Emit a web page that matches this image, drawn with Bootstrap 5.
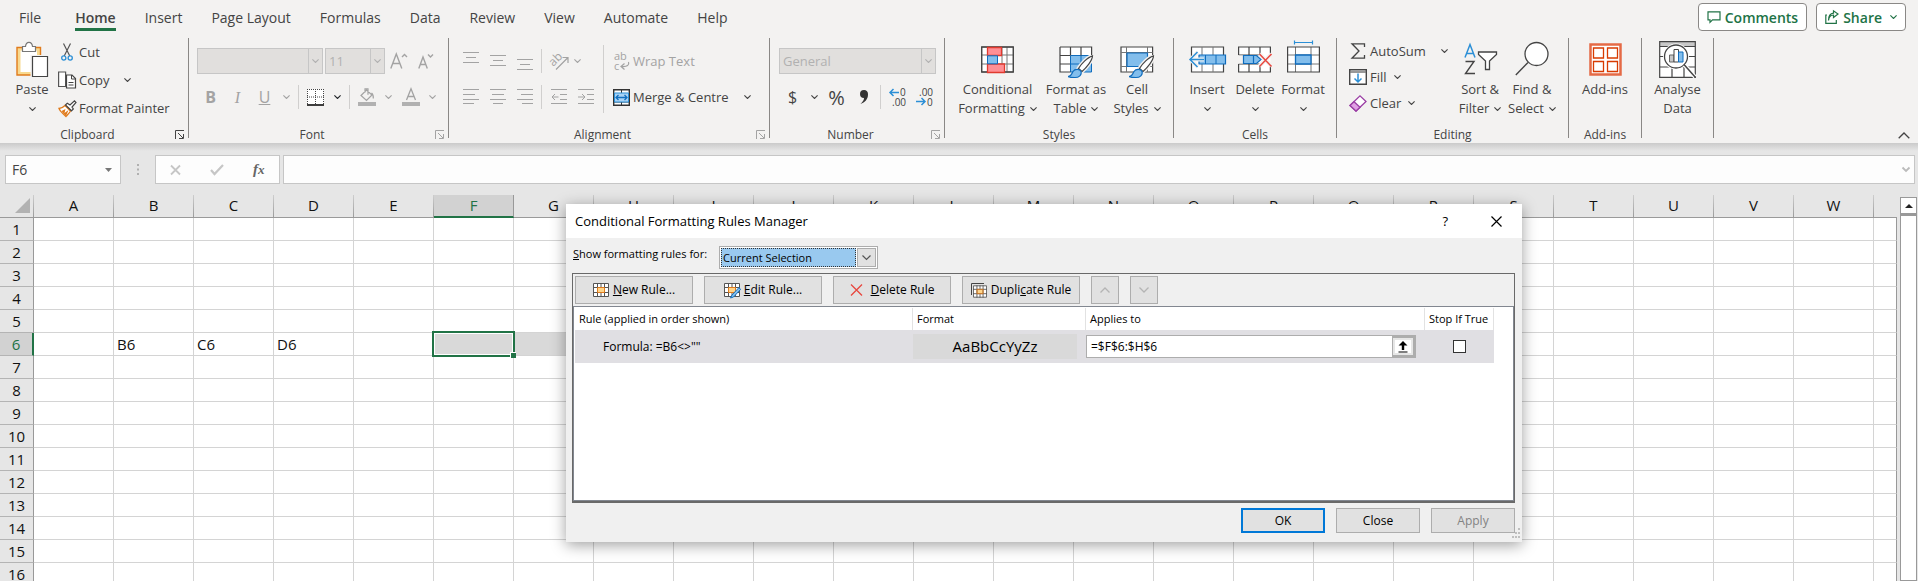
<!DOCTYPE html>
<html lang="en">
<head>
<meta charset="utf-8">
<meta name="viewport" content="width=device-width, initial-scale=1">
<title>Conditional Formatting Rules Manager</title>
<link href="https://cdn.jsdelivr.net/npm/bootstrap@5.3.0/dist/css/bootstrap.min.css" rel="stylesheet">
<style>
:root { --ink:#444; --dim:#a3a3a3; --green:#217346; --blue:#2b8fd6; }
body { font-family:"Open Sans","Noto Sans",sans-serif; font-size:13px; line-height:19px; color:var(--ink); background:#e6e6e6; }
button, select, input { font:inherit; color:inherit; }
button { background:none; border:0; padding:0; }
select { appearance:none; }
svg { display:block; flex:none; overflow:visible; }
.g { fill:none; stroke:currentColor; }
.serif { font-family:"Liberation Serif",serif; }

/* tab strip */
.tabstrip { background:#f3f2f1; height:38px; padding:0 12px 0 19px; }
.tabs { gap:29px; font-size:14px; }
.tabs .nav-link { padding:8px 0 0; color:var(--ink); height:31px; line-height:20px; }
.tabs .nav-link.active { font-weight:600; border-bottom:3px solid var(--green); }
.tabs .nav-item:first-child { margin-right:5px; }
.pills { gap:9px; padding-top:3px; }
.pill { height:28px; border:1px solid #8a8886; border-radius:4px; background:#fff; color:var(--green); font-weight:600; font-size:14px; padding:0 8px; }

/* ribbon */
.ribbon { background:#f3f2f1; height:105px; }
.rgroup { height:105px; }
.g-clip { width:188px; } .g-font { width:259px; } .g-align { width:320px; } .g-num { width:174px; }
.g-styles { width:228px; } .g-cells { width:162px; } .g-edit { width:231px; } .g-add { width:72px; } .g-data { width:71px; }
.rbody { height:88px; }
.rfoot { height:17px; line-height:17px; font-size:12px; }
.rline { width:1px; height:100px; background:#8a8886; }
.vline { width:1px; height:24px; background:#d0cfce; margin:0 3px; }
.tall { height:68px; margin-top:7px; }
.aligns { width:143px; }
.r1 { height:38px; } .r2 { height:34px; }
.ib { width:27px; height:28px; display:flex; align-items:center; justify-content:center; }
.cv { width:17px; height:28px; display:flex; align-items:center; justify-content:center; }
.cv.slim { width:10px; }
.dim { color:var(--dim); }
.big { display:flex; flex-direction:column; align-items:stretch; justify-content:flex-start; text-align:center; white-space:nowrap; }
.big .pic { height:42px; display:flex; align-items:center; justify-content:center; }
.big .ln { display:flex; height:19px; align-items:center; justify-content:center; gap:5px; }
.bw-48 { width:48px; } .bw-52 { width:52px; } .bw-70 { width:70px; } .bw-87 { width:87px; }
.pad-6 { padding-left:6px; } .pad-9 { padding-left:9px; } .pad-12 { padding-left:12px; }
.edits { width:105px; }
.sm { display:flex; align-items:center; gap:3px; white-space:nowrap; }
.sm .pic { width:18px; display:flex; justify-content:center; }
.sm .far { margin-left:12px; }
.h28 { height:28px; } .h26 { height:26px; }
.combo { height:26px; border:1px solid #c6c6c6; background:#e1dfdd; color:#b1b1b1; display:flex; }
.combo select { border:0; background:none; flex:1; min-width:0; padding:0 3px; color:#b1b1b1; opacity:1; }
.combo span { width:14px; border-left:1px solid #c6c6c6; display:flex; align-items:center; justify-content:center; }
.w-font { width:126px; margin-right:2px; } .w-size { width:60px; } .w-num { width:157px; }

/* formula bar */
.fbar { height:52px; padding:12px 3px 11px 5px; background:linear-gradient(#cacaca,#e6e6e6 8px); }
.fbox { height:29px; background:#fdfdfd; border:1px solid #c6c6c6; }
.fbox input { border:0; background:none; outline:0; min-width:0; flex:1; padding:0 6px; font-size:14px; }
.fname { width:116px; } .fbtns { width:125px; margin-right:3px; }
.fxb { font-size:15px; color:#666; }

/* sheet */
main, .pane { min-width:0; min-height:0; }
.grid { table-layout:fixed; border-collapse:separate; border-spacing:0; width:100%; font-size:15px; line-height:22px; color:#111; }
.grid .c-row { width:34px; } .grid .c-cell { width:80px; }
.grid th, .grid td { height:23px; padding:0; overflow:hidden; white-space:nowrap; }
.grid th { font-weight:400; text-align:center; background:#e6e6e6; }
.grid thead th { line-height:20px; padding-bottom:2px; border-bottom:1px solid #999; border-right:1px solid; border-image:linear-gradient(#d0d0d0,#999) 1; border-top:0; border-left:0; }
.grid thead th:last-child { border-right-width:0; }
.grid thead svg { margin-left:15px; }
.grid tbody th { border-right:1px solid #999; border-bottom:1px solid #b4b4b4; }
.grid td { background:#fff; border-right:1px solid #d4d4d4; border-bottom:1px solid #d4d4d4; padding-left:3px; }
.grid td:last-child { border-right-color:#999; }
.grid thead th.on { background:#d2d2d2; color:var(--green); border-image:none; border-color:#999; border-bottom:2px solid var(--green); padding-bottom:1px; }
.grid tbody th.on { background:#d2d2d2; color:var(--green); border-right:2px solid var(--green); }
.grid td.sel { background:#d9d9d9; }
.grid td.cur { position:relative; overflow:visible; }
.cur i { position:absolute; inset:-2px; border:2px solid var(--green); box-shadow:inset 0 0 0 1px #fff; }
.cur i::after { content:""; position:absolute; right:-3px; bottom:-3px; width:6px; height:6px; background:var(--green); border:solid #fff; border-width:1px 0 0 1px; }
.scroller { width:21px; flex:none; padding:2px 1px 0 3px; }
.scroller button { height:17px; border:1px solid #999; background:#fff; }
.track { border:1px solid #999; border-top-width:2px; background:#fff; }

/* dialog */
.dlg { position:absolute; left:566px; top:204px; width:956px; background:#f0f0f0; color:#000; font-size:12px; line-height:16px; box-shadow:0 3px 14px rgba(0,0,0,.38); }
.dtitle { height:34px; background:#fff; padding:0 20px 0 9px; font-size:13px; gap:43px; }
.dbody { padding:8px 7px 9px 6px; }
.scope { height:27px; gap:12px; font-size:11px; padding-left:1px; }
.dsel { width:159px; height:23px; border:1px solid #adadad; background:#fff; padding:1px; gap:1px; }
.dsel select { flex:1; min-width:0; border:1px dotted #333; background:#99c9ef; padding:0 1px; line-height:14px; }
.dsel span { width:19px; border:1px solid #adadad; background:#e1e1e1; display:flex; align-items:center; justify-content:center; }
.frame { border:1px solid #696969; border-width:1px 1px 2px 1px; }
.dtools { padding:2px; height:32px; gap:11px; }
.wb { height:28px; border:1px solid #adadad; background:#e1e1e1; display:flex; align-items:center; justify-content:center; gap:4px; white-space:nowrap; }
.wb:disabled { color:#838383; }
.w118 { width:118px; } .wb.w28 { width:28px; color:#b4b4b4; }
.list { background:#fff; border:1px solid #828790; height:195px; padding:1px; }
.rules { table-layout:fixed; border-collapse:separate; border-spacing:0; width:919px; }
.rules .c-rule { width:338px; } .rules .c-fmt { width:173px; } .rules .c-app { width:339px; } .rules .c-stop { width:69px; }
.rules th { font-weight:400; font-size:11px; height:22px; border-right:1px solid #e2e2e2; padding:0 4px; white-space:nowrap; }
.rules td { background:#e0dfe3; height:33px; padding:0; }
.rules td:first-child { padding-left:28px; }
.swatch { background:#d9d9d9; height:25px; width:164px; font-size:15px; line-height:25px; text-align:center; }
.ref { width:330px; height:23px; border:1px solid #adadad; background:#fff; }
.ref input { flex:1; min-width:0; border:0; background:none; outline:0; padding:0 4px; }
.ref button { width:23px; border:2px solid #adadad; border-left-width:1px; background:#fff; box-shadow:inset 0 0 0 2px #e6e6e6; display:flex; align-items:center; justify-content:center; }
.tick { appearance:none; width:13px; height:13px; border:1px solid #333; background:#fff; display:block; margin:0 auto; }
.dfoot { gap:11px; margin-top:5px; }
.dfoot .wb { width:84px; height:25px; }
.dfoot .ok { border:2px solid #0078d7; }
.grip { position:absolute; right:2px; bottom:3px; color:#bfbfbf; }
</style>
</head>
<body class="vh-100 overflow-hidden d-flex flex-column position-relative">

<svg width="0" height="0" class="position-absolute">
  <symbol id="chev" viewBox="0 0 7 4"><path d="M.4 .4 3.5 3.5 6.6 .4" fill="none" stroke="currentColor" stroke-width="1.1"/></symbol>
  <symbol id="launch" viewBox="0 0 9 9"><path d="M.5 9V.5H9M3 3l5 5M8.500 4v4.500H4" fill="none" stroke="currentColor"/></symbol>
  <symbol id="brush" viewBox="0 0 26 24"><path d="M24.500 .8C20 2 13 9 10.500 13.500l3.500 3C18 13 24.500 5.500 24.500 .8z" fill="#fff" stroke="#f3f2f1" stroke-width="4"/><path d="M24.500 .8C20 2 13 9 10.500 13.500l3.500 3C18 13 24.500 5.500 24.500 .8z" fill="#fff" stroke="#444" stroke-width="1.200"/><path d="M0 21.500c3.500 0 3.500-2.500 5-5 2-3 7-2.500 8 0 1 3.500-2 6-6 6C4 22.500 2 22.500 0 21.500z" fill="#83beec" stroke="#0f6cbd" stroke-width="1.200"/></symbol>
  <symbol id="grid16" viewBox="0 0 16 14"><path d="M.5 .5h15v13H.5z" fill="#fff"/><path d="M4.500 4.500h7v5h-7z" fill="#ffd58a"/><path d="M.5 .5h15v13H.5zM4.500 0v14M11.500 0v14M8 0v4M8 10v4M0 4.500h16M0 9.500h16" fill="none" stroke="#555"/><path d="M4.500 4.500h7v5h-7z" fill="none" stroke="#e07b1c"/></symbol>
</svg>

<header class="tabstrip d-flex justify-content-between flex-shrink-0">
  <ul class="nav tabs flex-nowrap text-nowrap">
    <li class="nav-item"><a class="nav-link" href="#">File</a></li>
    <li class="nav-item"><a class="nav-link active" href="#">Home</a></li>
    <li class="nav-item"><a class="nav-link" href="#">Insert</a></li>
    <li class="nav-item"><a class="nav-link" href="#">Page Layout</a></li>
    <li class="nav-item"><a class="nav-link" href="#">Formulas</a></li>
    <li class="nav-item"><a class="nav-link" href="#">Data</a></li>
    <li class="nav-item"><a class="nav-link" href="#">Review</a></li>
    <li class="nav-item"><a class="nav-link" href="#">View</a></li>
    <li class="nav-item"><a class="nav-link" href="#">Automate</a></li>
    <li class="nav-item"><a class="nav-link" href="#">Help</a></li>
  </ul>
  <div class="pills d-flex">
    <button class="pill d-flex align-items-center gap-1"><svg width="14" height="12" class="g" stroke-width="1.200"><path d="M1 .8h12v8H5.500L3 11.300V8.800H1z"/></svg>Comments</button>
    <button class="pill d-flex align-items-center"><svg width="14" height="14" class="g me-1" stroke-width="1.200"><path d="M2 5H.8v8.300h10.500V10M3.500 10.500C4 6.500 6 5 8.500 5V7.500L13 4 8.500 .8v2.400C5.500 3.500 3.500 6 3.500 10.500z"/></svg>Share<svg width="7" height="4" class="ms-2"><use href="#chev"/></svg></button>
  </div>
</header>

<div class="ribbon d-flex align-items-start flex-shrink-0">
  <section class="rgroup g-clip">
    <div class="rbody d-flex pad-6">
      <button class="big bw-52">
        <span class="pic"><svg width="32" height="36"><path d="M1 6.500h23.500V34H1z" fill="#f8d98f" stroke="#e07b1c" stroke-width="1.400"/><path d="M4.500 9.500h16.500v21.500H4.500z" fill="#fff"/><path d="M6.500 10.500V5.500h3C10 0 16 0 16.500 5.500h3v5z" fill="#fff" stroke="#777" stroke-width="1.200"/><path d="M16 15.500h15.500V35.500H16z" fill="#fff" stroke="#f3f2f1" stroke-width="3"/><path d="M16.500 15.500h15V35.500h-15z" fill="#fff" stroke="#444" stroke-width="1.200"/></svg></span>
        <span class="ln">Paste</span><span class="ln"><svg width="7" height="4"><use href="#chev"/></svg></span>
      </button>
      <div>
        <button class="sm h28"><span class="pic"><svg width="12" height="18"><path d="M2.500 .5 8.800 13M9.500 .5 3.200 13" fill="none" stroke="#555" stroke-width="1.200"/><g fill="none" stroke="#2b8fd6" stroke-width="1.300"><circle cx="2.800" cy="15" r="2.100"/><circle cx="9.200" cy="15" r="2.100"/></g></svg></span>Cut</button>
        <button class="sm h28"><span class="pic"><svg width="18" height="18"><path d="M.6 1h7v14.500h-7z" fill="#fff" stroke="#555" stroke-width="1.200"/><path d="M8.500 4h5.500l3.500 3.500V17h-9z" fill="#fff" stroke="#444" stroke-width="1.200"/><path d="M13.500 4v4h4M10.500 11.500h5M10.500 14h5" class="g" stroke="#444"/></svg></span>Copy<svg width="7" height="4" class="far"><use href="#chev"/></svg></button>
        <button class="sm h28"><span class="pic"><svg width="19" height="17"><path d="M1 8.500C3.500 8.500 5.500 7 7 5.500l5.500 5.500c-1 2-3.500 4-4.500 5.500C6 14 2 12 1 8.500z" fill="#fff" stroke="#e07b1c" stroke-width="1.300"/><path d="M3.500 11l4-2-1 4 4-3-2.500 6z" fill="#e07b1c"/><path d="M7.500 5l1.800-1.800L12 5 16.500.8l1.500 1.700L14 7l1.300 2-1.800 1.800z" fill="#fff" stroke="#444" stroke-width="1.200"/></svg></span>Format Painter</button>
      </div>
    </div>
    <div class="rfoot d-flex align-items-center pe-1"><span class="flex-fill text-center">Clipboard</span><svg width="9" height="9"><use href="#launch"/></svg></div>
  </section><div class="rline"></div>

  <section class="rgroup g-font">
    <div class="rbody pt-1 ps-2">
      <div class="r1 d-flex align-items-center">
        <div class="combo w-font"><select disabled aria-label="Font"><option></option></select><span><svg width="7" height="4"><use href="#chev"/></svg></span></div>
        <div class="combo w-size"><select disabled aria-label="Font size"><option>11</option></select><span><svg width="7" height="4"><use href="#chev"/></svg></span></div>
        <button class="ib dim"><svg width="17" height="16" class="g" stroke-width="1.400"><path d="M.8 15.500 6.300 1l5.500 14.500M2.800 10.500h7M12 4l2.500-2.500L17 4"/></svg></button>
        <button class="ib dim"><svg width="15" height="16" class="g" stroke-width="1.400"><path d="M.8 15.500 5 4l4.300 11.500M2.300 11.500h5.500M10 1.500 12.500 4 15 1.500"/></svg></button>
      </div>
      <div class="r2 d-flex align-items-center dim">
        <button class="ib fw-bold fs-6">B</button><button class="ib fs-6 fst-italic serif">I</button><button class="ib fs-6 text-decoration-underline">U</button><button class="cv"><svg width="7" height="4"><use href="#chev"/></svg></button>
        <div class="vline"></div>
        <button class="ib text-dark"><svg width="17" height="17"><path d="M0 0h17v15H0z" fill="#fff"/><path d="M.5 0v15M8.500 0v15M16.500 0v15M0 .5h17M0 8h17" fill="none" stroke="#444" stroke-dasharray="1 1"/><path d="M0 16h17" stroke="#000" stroke-width="1.500"/></svg></button><button class="cv text-dark"><svg width="7" height="4"><use href="#chev"/></svg></button>
        <div class="vline"></div>
        <button class="ib"><svg width="18" height="18"><path d="M3 7.500 8.500 2l5.500 5-5.500 5.500zM7 4.500V.8h3v6M13.500 5c2 1.500 2 3 1.800 5.500" class="g" stroke-width="1.200"/><path d="M0 14h18v4H0z" fill="#b1b1b1"/></svg></button><button class="cv"><svg width="7" height="4"><use href="#chev"/></svg></button>
        <button class="ib"><svg width="18" height="18"><path d="M4.500 12 9 .8 13.500 12M6 8.500h6" class="g" stroke-width="1.300"/><path d="M0 14h18v4H0z" fill="#b1b1b1"/></svg></button><button class="cv"><svg width="7" height="4"><use href="#chev"/></svg></button>
      </div>
    </div>
    <div class="rfoot d-flex align-items-center pe-1"><span class="flex-fill text-center">Font</span><svg width="9" height="9" class="dim"><use href="#launch"/></svg></div>
  </section><div class="rline"></div>

  <section class="rgroup g-align">
    <div class="rbody d-flex ps-2">
      <div class="aligns pt-1 dim">
        <div class="r1 d-flex align-items-center">
          <button class="ib"><svg width="16" height="18" class="g"><path d="M0 .5h16M3 5.500h10M0 10.500h16"/></svg></button><button class="ib"><svg width="16" height="18" class="g"><path d="M0 3.500h16M3 8.500h10M0 13.500h16"/></svg></button><button class="ib"><svg width="16" height="18" class="g"><path d="M0 7.500h16M3 12.500h10M0 17.500h16"/></svg></button>
          <div class="vline"></div>
          <button class="ib"><svg width="18" height="18"><g transform="rotate(-45 6 8)"><text x="-1" y="11" font-size="12" fill="currentColor">ab</text></g><path d="M6 17.500 17.500 6M12.500 5.500H18V11" class="g" stroke-width="1.200"/></svg></button><button class="cv slim"><svg width="7" height="4"><use href="#chev"/></svg></button>
        </div>
        <div class="r2 d-flex align-items-center">
          <button class="ib"><svg width="16" height="16" class="g"><path d="M0 .5h16M0 5.500h12M0 10.500h16M0 14.500h11"/></svg></button><button class="ib"><svg width="16" height="16" class="g"><path d="M0 .5h16M2 5.500h12M0 10.500h16M3 14.500h10"/></svg></button><button class="ib"><svg width="16" height="16" class="g"><path d="M0 .5h16M4 5.500h12M0 10.500h16M5 14.500h11"/></svg></button>
          <div class="vline"></div>
          <button class="ib"><svg width="16" height="16" class="g"><path d="M0 .5h16M9 5.500h7M9 10.500h7M0 14.500h16M1 8h6.500M4 5 1 8l3 3"/></svg></button><button class="ib"><svg width="16" height="16" class="g"><path d="M0 .5h16M9 5.500h7M9 10.500h7M0 14.500h16M0 8h6.500M4 5l3 3-3 3"/></svg></button>
        </div>
      </div>
      <div class="vline tall me-2"></div>
      <div class="pt-1">
        <button class="sm r1 dim"><span class="pic"><svg width="17" height="19"><text x="1" y="8" font-size="11" fill="currentColor">ab</text><text x="1" y="18" font-size="11" fill="currentColor">c</text><path d="M15.500 10c1 3-1 5-7 4.500M11.500 11.500l-3.500 3 3.500 3" class="g" stroke-width="1.200"/></svg></span>Wrap Text</button>
        <button class="sm r2"><span class="pic"><svg width="17" height="17"><path d="M.7 .7h15.600v15.600H.7z" fill="#fff" stroke="#333" stroke-width="1.400"/><path d="M8.500 0v17M1 4.500h15M1 13h15" stroke="#333"/><path d="M1.500 4h14v9h-14z" fill="#a9d3f5" stroke="#2b8fd6"/><path d="M3 8.500h11M5.500 6 3 8.500 5.500 11M11.500 6 14 8.500 11.500 11" fill="none" stroke="#1270c0" stroke-width="1.300"/></svg></span>Merge &amp; Centre<svg width="7" height="4" class="far"><use href="#chev"/></svg></button>
      </div>
    </div>
    <div class="rfoot d-flex align-items-center pe-1"><span class="flex-fill text-center">Alignment</span><svg width="9" height="9" class="dim"><use href="#launch"/></svg></div>
  </section><div class="rline"></div>

  <section class="rgroup g-num">
    <div class="rbody pt-1 pad-9">
      <div class="r1 d-flex align-items-center"><div class="combo w-num"><select disabled aria-label="Number format"><option>General</option></select><span><svg width="7" height="4"><use href="#chev"/></svg></span></div></div>
      <div class="r2 d-flex align-items-center">
        <button class="ib fs-6">$</button><button class="cv"><svg width="7" height="4"><use href="#chev"/></svg></button><button class="ib fs-5">%</button>
        <button class="ib"><svg width="10" height="16"><path d="M5 1a4 4 0 0 1 4 4.500C9 10 6 13.500 1.500 15 4 12.500 5 11 5 9a4 4 0 0 1 0-8z" fill="#333"/></svg></button>
        <div class="vline"></div>
        <button class="ib"><svg width="18" height="18"><text x="11" y="8" font-size="10" fill="#444">0</text><text x="3" y="18" font-size="10" fill="#444">.00</text><path d="M1 4.500h9M4.500 1 1 4.500 4.500 8" fill="none" stroke="#2b8fd6" stroke-width="1.500"/></svg></button>
        <button class="ib"><svg width="18" height="18"><text x="3" y="8" font-size="10" fill="#444">.00</text><text x="11" y="18" font-size="10" fill="#444">0</text><path d="M0 13.500h9M5.500 10 9 13.500 5.500 17" fill="none" stroke="#2b8fd6" stroke-width="1.500"/></svg></button>
      </div>
    </div>
    <div class="rfoot d-flex align-items-center pe-1"><span class="flex-fill text-center">Number</span><svg width="9" height="9" class="dim"><use href="#launch"/></svg></div>
  </section><div class="rline"></div>

  <section class="rgroup g-styles">
    <div class="rbody d-flex pad-9">
      <button class="big bw-87"><span class="pic"><svg width="33" height="27"><path d="M.7 1h31.600v25H.7z" fill="#fff"/><path d="M.7 1h31.600v25H.7zM6.500 1v25M26 1v25M21 1v25M.7 9h31.600M.7 18h31.600" fill="none" stroke="#777"/><path d="M.7 1h31.600v25H.7z" fill="none" stroke="#444" stroke-width="1.300"/><path d="M6.500 1.500h14V9.500h-14zM6.500 18h17v8.500h-17z" fill="#ff8f95" stroke="#e03a2f" stroke-width="1.300"/><path d="M6.500 9.800h10v8h-10z" fill="#83beec" stroke="#0f6cbd" /></svg></span><span class="ln">Conditional</span><span class="ln">Formatting <svg width="7" height="4"><use href="#chev"/></svg></span></button>
      <button class="big bw-70"><span class="pic"><svg width="35" height="27"><path d="M1 1h31.600v25H1z" fill="#fff"/><path d="M11.500 9.500h21V26h-21z" fill="#83beec"/><path d="M11.500 9.500h21V26h-21zM22 9.500V26M11.500 18h21" fill="none" stroke="#0f6cbd"/><path d="M1 1h31.600v8.500M1 1v25h10.500M11.500 1v8.500M22 1v8.500M1 9.500h10M1 18h10" fill="none" stroke="#444" stroke-width="1.200"/><use href="#brush" x="9" y="9" width="26" height="24"/></svg></span><span class="ln">Format as</span><span class="ln">Table <svg width="7" height="4"><use href="#chev"/></svg></span></button>
      <button class="big bw-52"><span class="pic"><svg width="35" height="27"><path d="M1 1h31.600v25H1z" fill="#fff" stroke="#444" stroke-width="1.200"/><path d="M6.500 1v25M27.500 1v25M1 6.500h31.600M1 20.500h31.600" fill="none" stroke="#777"/><path d="M7 7h20.500v13.500H7z" fill="#83beec" stroke="#0f6cbd" stroke-width="1.200"/><use href="#brush" x="9" y="9" width="26" height="24"/></svg></span><span class="ln">Cell</span><span class="ln">Styles <svg width="7" height="4"><use href="#chev"/></svg></span></button>
    </div>
    <div class="rfoot text-center">Styles</div>
  </section><div class="rline"></div>

  <section class="rgroup g-cells">
    <div class="rbody d-flex pad-9">
      <button class="big bw-48"><span class="pic"><svg width="37" height="27"><path d="M2.500 1h32v25h-32z" fill="#fff" stroke="#444" stroke-width="1.200"/><path d="M13 1v25M24 1v25" stroke="#777"/><path d="M10 9h26.500v9H10z" fill="#83beec" stroke="#0f6cbd" stroke-width="1.200"/><path d="M16.500 9v9M27 9v9" stroke="#0f6cbd"/><path d="M15 13.500H2M9 6l-7.500 7.500L9 21" fill="none" stroke="#f3f2f1" stroke-width="4"/><path d="M15 13.500H1.500M8.500 6l-7.500 7.500L8.500 21" fill="none" stroke="#2b8fd6" stroke-width="1.500"/></svg></span><span class="ln">Insert</span><span class="ln"><svg width="7" height="4"><use href="#chev"/></svg></span></button>
      <button class="big bw-48"><span class="pic"><svg width="34" height="27"><path d="M.6 1h31.800v25H.6z" fill="#fff"/><path d="M.6 9V1h31.800v8M.6 18v8h31.800v-6M11 1v8M22 1v8M11 18v8M22 18v8M.6 9H22M.6 18H22" fill="none" stroke="#444" stroke-width="1.200"/><path d="M0 9.500h5V17.500H0z" fill="#f3f2f1"/><path d="M5.500 9.500h13l4.500 4-4.500 4h-13zM15.500 9.500v8" fill="#83beec" stroke="#0f6cbd" stroke-width="1.200"/><path d="M21.500 8 33.500 20M33.500 8 21.500 20" stroke="#f3f2f1" stroke-width="4"/><path d="M21.500 8 33.500 20.500M33.500 8 21.500 20.500" stroke="#e8473f" stroke-width="1.500"/></svg></span><span class="ln">Delete</span><span class="ln"><svg width="7" height="4"><use href="#chev"/></svg></span></button>
      <button class="big bw-48"><span class="pic"><svg width="33" height="27"><path d="M.6 1h31.800v25H.6z" fill="#fff"/><path d="M8.500 1v25M24 1v25M.6 9h31.800M.6 18h31.800" stroke="#777" fill="none"/><path d="M.6 1h31.800v25H.6z" fill="none" stroke="#444" stroke-width="1.200"/><path d="M8.500 9H24v9H8.500z" fill="#83beec" stroke="#0f6cbd" stroke-width="1.300"/><path d="M7.500-3.500h18M7.500-5.500v4M25.500-5.500v4" stroke="#2b8fd6" fill="none" stroke-width="1.200"/></svg></span><span class="ln">Format</span><span class="ln"><svg width="7" height="4"><use href="#chev"/></svg></span></button>
    </div>
    <div class="rfoot text-center">Cells</div>
  </section><div class="rline"></div>

  <section class="rgroup g-edit">
    <div class="rbody d-flex pad-12">
      <div class="edits">
        <button class="sm h26"><span class="pic"><svg width="15" height="16" class="g" stroke-width="1.300"><path d="M13.500 4V.8H1L8 8l-7 7.200h12.500V12"/></svg></span>AutoSum<svg width="7" height="4" class="far"><use href="#chev"/></svg></button>
        <button class="sm h26"><span class="pic"><svg width="18" height="16"><path d="M.7 .7h16.600v14.600H.7z" fill="#fff" stroke="#444" stroke-width="1.400"/><path d="M1 3h16" stroke="#777" stroke-width="1.500"/><path d="M9 4.500v8.500M5.500 9.500 9 13l3.500-3.500" fill="none" stroke="#2b8fd6" stroke-width="1.500"/></svg></span>Fill <svg width="7" height="4" class="ms-1"><use href="#chev"/></svg></button>
        <button class="sm h26"><span class="pic"><svg width="18" height="17"><path d="M1 10.500 11 .8l6 5.700L7 16z" fill="#fff" stroke="#9b3fa5" stroke-width="1.300"/><path d="M1 10.500 5 6.700l6 5.600L7 16z" fill="#e0a0e4" stroke="#9b3fa5" stroke-width="1.300"/></svg></span>Clear <svg width="7" height="4" class="ms-1"><use href="#chev"/></svg></button>
      </div>
      <button class="big bw-52"><span class="pic"><svg width="33" height="32"><path d="M1 14.500 6 1.500l5 13M2.800 10.500h6.500" fill="none" stroke="#2b8fd6" stroke-width="1.500"/><path d="M1.500 18.500h8.500L1.500 30.500H11" fill="none" stroke="#444" stroke-width="1.400"/><path d="M14.500 9h18v2.500l-7 6.500v8.500h-4V18l-7-6.500z" fill="#fff" stroke="#444" stroke-width="1.300"/></svg></span><span class="ln">Sort &amp;</span><span class="ln">Filter <svg width="7" height="4"><use href="#chev"/></svg></span></button>
      <button class="big bw-52"><span class="pic"><svg width="34" height="34"><circle cx="21.500" cy="12" r="11.500" fill="#fff" stroke="#444" stroke-width="1.300"/><path d="M13 20.500 .8 33" stroke="#444" stroke-width="1.400"/></svg></span><span class="ln">Find &amp;</span><span class="ln">Select <svg width="7" height="4"><use href="#chev"/></svg></span></button>
    </div>
    <div class="rfoot text-center">Editing</div>
  </section><div class="rline"></div>

  <section class="rgroup g-add">
    <div class="rbody">
      <button class="big w-100"><span class="pic"><svg width="33" height="33" fill="#fff" stroke="#d83b01"><path d="M1.500 1.500h30v30h-30z" stroke="#e56a45" stroke-width="2.500"/><path d="M4.500 5h10v10h-10zM18.500 5h10v10h-10zM4.500 18.500h10v10h-10zM18.500 18.500h10v10h-10z" stroke-width="1.300"/></svg></span><span class="ln">Add-ins</span></button>
    </div>
    <div class="rfoot text-center">Add-ins</div>
  </section><div class="rline"></div>

  <section class="rgroup g-data">
    <button class="big w-100"><span class="pic"><svg width="37" height="37"><path d="M.7 .7h35.600v35.600H.7z" fill="#fff"/><path d="M1 1h35v4.500H1z" fill="#c8c8c8"/><path d="M.7 .7h35.600v35.600H.7zM1 5.500h35M1 15.500h35M1 26h35M13 26v10M25 26v10" fill="none" stroke="#444" stroke-width="1.200"/><circle cx="17" cy="15.500" r="13" fill="#fff"/><circle cx="17" cy="15.500" r="11.500" fill="#fff" stroke="#444" stroke-width="1.300"/><path d="M25.500 24 36 36" stroke="#fff" stroke-width="4"/><path d="M25 23.500 36.500 36.500" stroke="#444" stroke-width="1.500"/><path d="M10.500 14h4.500v7h-4.500z" fill="#c8c8c8" stroke="#666"/><path d="M15 8.500h4.500V21H15z" fill="#fff" stroke="#444"/><path d="M19.500 11H24v10h-4.500z" fill="#83beec" stroke="#0f6cbd"/></svg></span><span class="ln">Analyse</span><span class="ln">Data</span></button>
  </section><div class="rline"></div>
  <button class="ms-auto align-self-end me-2 pb-1" aria-label="Collapse the ribbon"><svg width="12" height="7" class="g" stroke-width="1.300"><path d="M.7 6.300 6 1l5.300 5.300"/></svg></button>
</div>

<div class="fbar d-flex flex-shrink-0">
  <div class="fbox fname d-flex align-items-center pe-2"><input value="F6" aria-label="Name box"><svg width="7" height="4"><path d="M0 0h7L3.500 4z" fill="#777"/></svg></div>
  <svg width="34" height="29"><path d="M16 9h2v2h-2zM16 13.500h2v2h-2zM16 18h2v2h-2z" fill="#b0b0b0"/></svg>
  <div class="fbox fbtns d-flex justify-content-around align-items-center">
    <button aria-label="Cancel"><svg width="11" height="10"><path d="M1 .5 10 9.500M10 .5 1 9.500" stroke="#c6c6c6" stroke-width="1.800"/></svg></button>
    <button aria-label="Enter"><svg width="14" height="11"><path d="M1 6l3.500 4L13 1" fill="none" stroke="#c6c6c6" stroke-width="2.200"/></svg></button>
    <button aria-label="Insert function" class="fxb serif fst-italic fw-bold">f<small>x</small></button>
  </div>
  <div class="fbox d-flex align-items-center flex-fill pe-1"><input aria-label="Formula bar"><svg width="8" height="5"><path d="M.5 .5 4 4 7.500 .5" fill="none" stroke="#bbb" stroke-width="1.800"/></svg></div>
</div>

<main class="d-flex flex-fill overflow-hidden">
  <div class="pane flex-fill"><table class="grid" id="sheet"></table></div>
  <div class="scroller d-flex flex-column">
    <button class="d-flex align-items-center justify-content-center" aria-label="Scroll up"><svg width="8" height="4"><path d="M0 4h8L4 0z" fill="#222"/></svg></button>
    <div class="track flex-fill"></div>
  </div>
</main>

<section class="dlg" role="dialog" aria-label="Conditional Formatting Rules Manager">
  <div class="dtitle d-flex align-items-center"><span class="me-auto">Conditional Formatting Rules Manager</span><button aria-label="Help">?</button><button aria-label="Close dialog"><svg width="11" height="11"><path d="M.5 .5l10 10M10.500 .5l-10 10" stroke="#000" stroke-width="1.200"/></svg></button></div>
  <div class="dbody">
    <div class="scope d-flex">
      <label for="scope"><u>S</u>how formatting rules for:</label>
      <div class="dsel d-flex"><select id="scope"><option>Current Selection</option></select><span><svg width="9" height="5"><path d="M.5 .5l4 4 4-4" fill="none" stroke="#555" stroke-width="1.200"/></svg></span></div>
    </div>
    <div class="frame">
      <div class="dtools d-flex">
        <button class="wb w118"><svg width="16" height="14"><use href="#grid16"/></svg><span><u>N</u>ew Rule...</span></button>
        <button class="wb w118"><svg width="16" height="14"><use href="#grid16" width="16" height="14"/><path d="M15 4.500 8 12l-1.500 3L9.500 14 16.500 6.500z" fill="#83beec" stroke="#1270c0"/></svg><span><u>E</u>dit Rule...</span></button>
        <button class="wb w118"><svg width="13" height="12" class="me-1"><path d="M1 .5 12 11.500M12 .5 1 11.500" stroke="#e8473f" stroke-width="1.300"/></svg><span><u>D</u>elete Rule</span></button>
        <button class="wb w118"><svg width="16" height="15"><path d="M.5 12V.5H13" fill="none" stroke="#444"/><use href="#grid16" x="2" y="2" width="14" height="13"/></svg><span>Dupli<u>c</u>ate Rule</span></button>
        <button class="wb w28" disabled aria-label="Move up"><svg width="10" height="6" class="g" stroke-width="1.300"><path d="M.5 5.500 5 1l4.500 4.500"/></svg></button>
        <button class="wb w28" disabled aria-label="Move down"><svg width="10" height="6" class="g" stroke-width="1.300"><path d="M.5 .5 5 5 9.500 .5"/></svg></button>
      </div>
      <div class="list">
        <table class="rules">
          <colgroup><col class="c-rule"><col class="c-fmt"><col class="c-app"><col class="c-stop"></colgroup>
          <thead><tr><th>Rule (applied in order shown)</th><th>Format</th><th>Applies to</th><th>Stop If True</th></tr></thead>
          <tbody><tr><td>Formula: =B6&lt;&gt;""</td><td><div class="swatch">AaBbCcYyZz</div></td>
            <td><div class="ref d-flex"><input value="=$F$6:$H$6" aria-label="Applies to"><button aria-label="Pick range"><svg width="10" height="12"><path d="M5 0l4.500 4.500H6.200V9H3.800V4.500H.5zM.5 10.500h9v1h-9z" fill="#000"/></svg></button></div></td>
            <td><input type="checkbox" class="tick" aria-label="Stop If True"></td></tr></tbody>
        </table>
      </div>
    </div>
    <div class="dfoot d-flex justify-content-end"><button class="wb ok">OK</button><button class="wb">Close</button><button class="wb" disabled>Apply</button></div>
  </div>
  <svg class="grip" width="8" height="11"><path d="M6 0h2v2H6zM3 4h2v2H3zM6 4h2v2H6zM0 8h2v2H0zM3 8h2v2H3zM6 8h2v2H6z" fill="currentColor"/></svg>
</section>

<script>
const letters = [..."ABCDEFGHIJKLMNOPQRSTUVW"];
const values = { B6: "B6", C6: "C6", D6: "D6" };
const picked = ["F6", "G6", "H6"];
let html = '<colgroup><col class="c-row">' + '<col class="c-cell">'.repeat(letters.length) + '<col></colgroup>';
html += '<thead><tr><th><svg width="15" height="15"><path d="M15 0v15H0z" fill="#b2b2b2"/></svg></th>'
  + letters.map(l => `<th class="${l === "F" ? "on" : ""}">${l}</th>`).join("") + '<th></th></tr></thead><tbody>';
for (let r = 1; r <= 16; r++) {
  html += `<tr><th class="${r === 6 ? "on" : ""}">${r}</th>` + letters.map(l => {
    const id = l + r;
    const cls = (picked.includes(id) ? "sel " : "") + (id === "F6" ? "cur" : "");
    return `<td class="${cls}">${id === "F6" ? "<i></i>" : values[id] || ""}</td>`;
  }).join("") + "<td></td></tr>";
}
document.getElementById("sheet").innerHTML = html + "</tbody>";
</script>
<script src="https://cdn.jsdelivr.net/npm/bootstrap@5.3.0/dist/js/bootstrap.bundle.min.js"></script>
</body>
</html>
